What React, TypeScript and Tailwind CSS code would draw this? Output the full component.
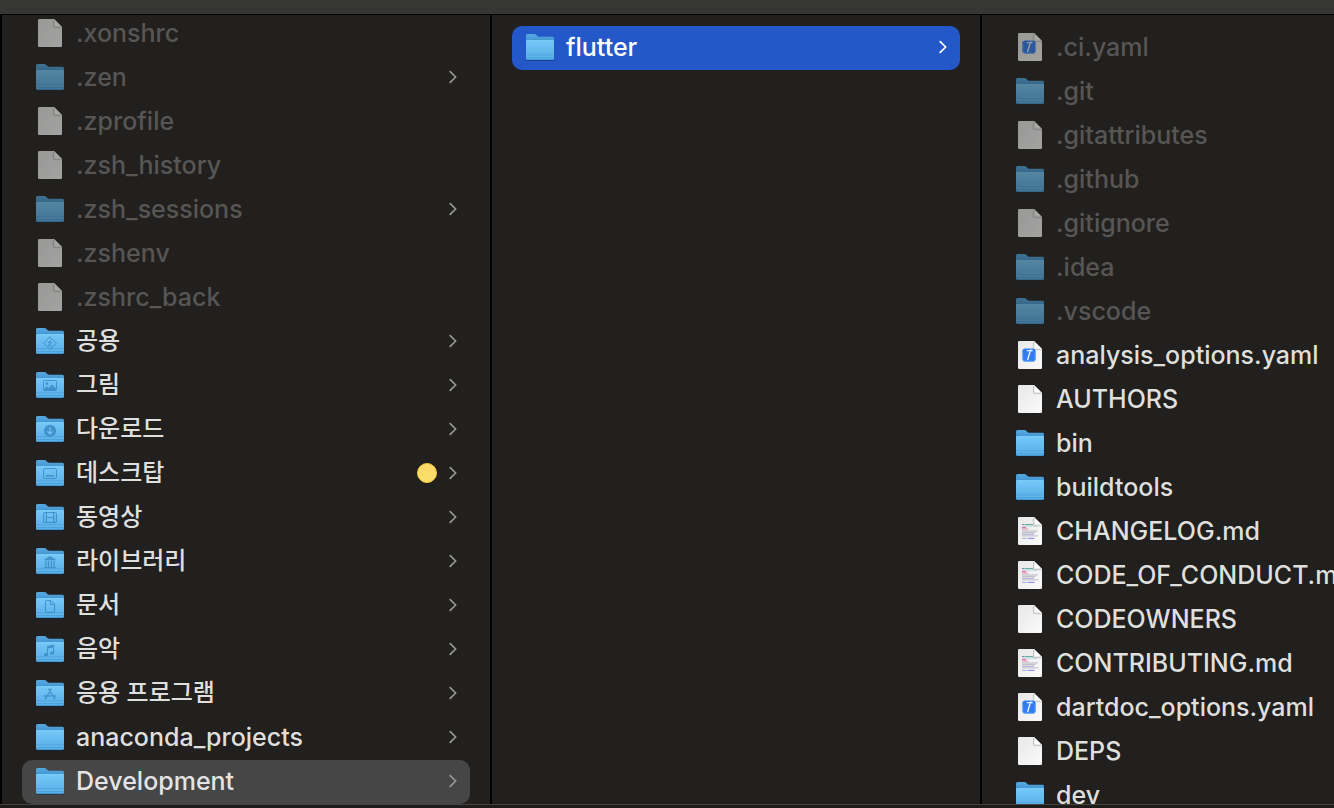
import type { ReactNode } from "react";

type Kind = "folder" | "file" | "yaml" | "md";

type Entry = {
  name: string;
  kind: Kind;
  hidden?: boolean;
  chevron?: boolean;
  tag?: boolean;
  korean?: boolean;
  state?: "selected" | "active";
  glyph?: ReactNode;
};

const line = { fill: "none", stroke: "#3583c1", strokeWidth: 1 };

const sharedGlyph = (
  <g {...line}>
    <path d="M14 8.8 L20.4 15.2 L14 21.6 L7.6 15.2 Z" strokeLinejoin="round" />
    <path d="M14.4 13 L13.4 16 L15.2 17.6 L15 19.2 M13.4 16 L12 18.8 M12 14.6 L14.2 13.6 L16.4 15.2" />
    <circle cx="14.6" cy="11.7" r="0.6" fill="#3583c1" stroke="none" />
  </g>
);
const pictureGlyph = (
  <g>
    <rect x="7.5" y="8.5" width="13" height="10" rx="1" {...line} />
    <circle cx="11" cy="11.6" r="1.3" fill="#3583c1" />
    <path d="M8 18.4 V17 L11 14.6 L12.8 16 L16 12.6 L20 16.6 V18.4 Z" fill="#3583c1" />
  </g>
);
const downloadGlyph = (
  <g>
    <circle cx="14" cy="14.8" r="6.1" fill="#3583c1" />
    <path d="M14 11.4 V17.6 M11.4 15.4 L14 18 L16.6 15.4" fill="none" stroke="#7cc4f0" strokeWidth="1.3" />
  </g>
);
const desktopGlyph = (
  <g>
    <rect x="7.5" y="8.5" width="13" height="10" rx="1.5" {...line} />
    <rect x="10" y="15" width="8" height="1.6" fill="#3583c1" />
  </g>
);
const movieGlyph = (
  <g {...line}>
    <rect x="7.5" y="8.5" width="13" height="10" rx="1" />
    <path d="M10.5 8.5 V18.5 M17.5 8.5 V18.5 M10.5 13.5 H17.5" />
    <path d="M9 9.5 V18" strokeDasharray="1 1.5" />
    <path d="M19 9.5 V18" strokeDasharray="1 1.5" />
  </g>
);
const libraryGlyph = (
  <g fill="#3583c1">
    <path d="M14 8 L19.6 11.2 V12.2 H8.4 V11.2 Z" />
    <rect x="9.2" y="12.8" width="1.3" height="6" />
    <rect x="11.9" y="12.8" width="1.3" height="6" />
    <rect x="14.8" y="12.8" width="1.3" height="6" />
    <rect x="17.5" y="12.8" width="1.3" height="6" />
    <rect x="8" y="19" width="12" height="1.2" />
  </g>
);
const documentGlyph = (
  <g {...line}>
    <path d="M10.4 8.5 H14.6 L18.6 12.5 V19 Q18.6 20.4 17.2 20.4 H10.9 Q9.5 20.4 9.5 19 V9.6 Q9.5 8.5 10.4 8.5 Z" />
    <path d="M14.4 8.8 V12.6 H18.4" />
  </g>
);
const musicGlyph = (
  <g fill="#3583c1">
    <path d="M11 10 L18 8.4 V17 H17 V11.4 L12 12.5 V18.4 H11 Z" />
    <ellipse cx="10.1" cy="18.6" rx="2.1" ry="1.6" />
    <ellipse cx="16.1" cy="17" rx="2.1" ry="1.6" />
  </g>
);
const appsGlyph = (
  <g {...line} strokeWidth="1.4" strokeLinecap="round">
    <path d="M15.2 9 L9.4 18.8 M12.8 9 L18.6 18.8 M8 16 H14.6 M17.2 16 H20" />
  </g>
);

const home: Entry[] = [
  { name: ".xonshrc", kind: "file", hidden: true },
  { name: ".zen", kind: "folder", hidden: true, chevron: true },
  { name: ".zprofile", kind: "file", hidden: true },
  { name: ".zsh_history", kind: "file", hidden: true },
  { name: ".zsh_sessions", kind: "folder", hidden: true, chevron: true },
  { name: ".zshenv", kind: "file", hidden: true },
  { name: ".zshrc_back", kind: "file", hidden: true },
  { name: "공용", kind: "folder", korean: true, chevron: true, glyph: sharedGlyph },
  { name: "그림", kind: "folder", korean: true, chevron: true, glyph: pictureGlyph },
  { name: "다운로드", kind: "folder", korean: true, chevron: true, glyph: downloadGlyph },
  { name: "데스크탑", kind: "folder", korean: true, chevron: true, tag: true, glyph: desktopGlyph },
  { name: "동영상", kind: "folder", korean: true, chevron: true, glyph: movieGlyph },
  { name: "라이브러리", kind: "folder", korean: true, chevron: true, glyph: libraryGlyph },
  { name: "문서", kind: "folder", korean: true, chevron: true, glyph: documentGlyph },
  { name: "음악", kind: "folder", korean: true, chevron: true, glyph: musicGlyph },
  { name: "응용 프로그램", kind: "folder", korean: true, chevron: true, glyph: appsGlyph },
  { name: "anaconda_projects", kind: "folder", chevron: true },
  { name: "Development", kind: "folder", chevron: true, state: "selected" },
];

const development: Entry[] = [
  { name: "flutter", kind: "folder", chevron: true, state: "active" },
];

const flutter: Entry[] = [
  { name: ".ci.yaml", kind: "yaml", hidden: true },
  { name: ".git", kind: "folder", hidden: true },
  { name: ".gitattributes", kind: "file", hidden: true },
  { name: ".github", kind: "folder", hidden: true },
  { name: ".gitignore", kind: "file", hidden: true },
  { name: ".idea", kind: "folder", hidden: true },
  { name: ".vscode", kind: "folder", hidden: true },
  { name: "analysis_options.yaml", kind: "yaml" },
  { name: "AUTHORS", kind: "file" },
  { name: "bin", kind: "folder" },
  { name: "buildtools", kind: "folder" },
  { name: "CHANGELOG.md", kind: "md" },
  { name: "CODE_OF_CONDUCT.md", kind: "md" },
  { name: "CODEOWNERS", kind: "file" },
  { name: "CONTRIBUTING.md", kind: "md" },
  { name: "dartdoc_options.yaml", kind: "yaml" },
  { name: "DEPS", kind: "file" },
  { name: "dev", kind: "folder" },
];

function Gradients() {
  return (
    <svg className="absolute size-0" aria-hidden="true">
      <defs>
        <linearGradient id="folder-front" x1="0" y1="0" x2="0" y2="1">
          <stop offset="0" stopColor="#7bcdf8" />
          <stop offset="0.1" stopColor="#72c6f6" />
          <stop offset="1" stopColor="#56ace6" />
        </linearGradient>
        <linearGradient id="folder-back" x1="0" y1="0" x2="0" y2="1">
          <stop offset="0" stopColor="#55a9e0" />
          <stop offset="1" stopColor="#3786c4" />
        </linearGradient>
        <linearGradient id="paper" x1="0" y1="0" x2="1" y2="1">
          <stop offset="0" stopColor="#e8e8e8" />
          <stop offset="1" stopColor="#fafafa" />
        </linearGradient>
      </defs>
    </svg>
  );
}

function FolderIcon({ glyph }: { glyph?: ReactNode }) {
  return (
    <svg viewBox="0 -1 28 28" className="size-7 overflow-visible" aria-hidden="true">
      <rect x="0.3" y="20" width="27.4" height="7" rx="1.5" fill="#000000" opacity="0.35" />
      <path d="M0 1.5 Q0 0 1.5 0 H8.2 Q9.4 0 10.2 0.8 L11.4 2 Q12.2 2.8 13.4 2.8 H26.5 Q28 2.8 28 4.3 V12 H0 Z" fill="url(#folder-back)" />
      <path d="M0 7.4 Q0 6 1.4 6 H26.6 Q28 6 28 7.4 V24.6 Q28 26 26.6 26 H1.4 Q0 26 0 24.6 Z" fill="url(#folder-front)" />
      <path d="M0 21 H28 M0 23.5 H28" stroke="#4296d2" strokeWidth="0.8" opacity="0.65" />
      <path d="M0 22 H28" stroke="#82cdf5" strokeWidth="0.7" opacity="0.5" />
      <path d="M0.6 25.4 Q1 25.7 1.6 25.7 H26.4 Q27 25.7 27.4 25.4" stroke="#3887c6" strokeWidth="0.7" fill="none" />
      {glyph && <g opacity="0.75">{glyph}</g>}
    </svg>
  );
}

function FileIcon({ kind }: { kind: Kind }) {
  return (
    <svg viewBox="0 0 28 28" className="size-7" aria-hidden="true">
      <path d="M2 1.3 Q2 0 3.3 0 H18 L26 8 V26.7 Q26 28 24.7 28 H3.3 Q2 28 2 26.7 Z" fill="url(#paper)" />
      <path d="M17.4 1 V7.4 Q17.4 8.6 18.6 8.6 H25.4" fill="none" stroke="#000000" strokeWidth="1.2" opacity="0.13" />
      <path d="M18 0 L26 8 H19 Q18 8 18 7 Z" fill="#ffffff" stroke="#b4b4b4" strokeWidth="0.5" />
      {kind === "yaml" && (
        <g>
          <rect x="6.4" y="7.4" width="13.2" height="13.2" rx="2.8" fill="#2f7cf3" />
          <path d="M6.9 12 V18 Q6.9 20.1 9 20.1 H17 Q19.1 20.1 19.1 18 V12" fill="none" stroke="#65a6fa" strokeWidth="0.8" />
          <path d="M10.8 9.9 L15.5 9.2 L16.4 10.2" fill="none" stroke="#dfe7f2" strokeWidth="1.3" />
          <path d="M14.2 10 L11.7 18.5" fill="none" stroke="#eef3fa" strokeWidth="1.4" strokeLinecap="round" />
        </g>
      )}
      {kind === "md" && (
        <g fill="none" strokeWidth="0.9">
          <path d="M6 7.5 H8" stroke="#9467bd" />
          <path d="M8.5 7.5 H17" stroke="#54a89c" />
          <path d="M6 9 H21" stroke="#a9cbd2" />
          <path d="M6 10.7 H10" stroke="#d6438b" />
          <path d="M6 12 H12" stroke="#df83ae" />
          <path d="M6 14 H21.5 M6 15.4 H19.5" stroke="#b5b5bd" />
          <path d="M6 17.2 H18" stroke="#9a92d8" />
          <path d="M6 18.9 H22" stroke="#b9b9c1" />
          <path d="M6 21.4 H11" stroke="#a5a5d8" />
          <path d="M12 21.4 H18.5" stroke="#6c78e6" />
        </g>
      )}
    </svg>
  );
}

function Chevron() {
  return (
    <svg viewBox="0 0 8 14" className="h-3.5 w-2" fill="none" stroke="currentColor" strokeWidth="1.7" strokeLinecap="round" strokeLinejoin="round" aria-hidden="true">
      <path d="M1.2 1.6 L6.7 7 L1.2 12.4" />
    </svg>
  );
}

const rowStyles = {
  plain: "text-[#dfdfdd]",
  hidden: "text-[#575654]",
  selected: "bg-[#464646] text-[#e4e4e4]",
  active: "bg-[#2458c9] text-white",
};

function Row({ entry }: { entry: Entry }) {
  const style = rowStyles[entry.state ?? (entry.hidden ? "hidden" : "plain")];
  return (
    <li>
      <button
        type="button"
        className={`flex h-11 w-full items-center gap-3 rounded-[10px] pr-[13px] pb-0.5 pl-3.5 text-left whitespace-nowrap ${style}`}
      >
        <span className={`shrink-0 ${entry.hidden ? "opacity-60" : ""}`}>
          {entry.kind === "folder" ? <FolderIcon glyph={entry.glyph} /> : <FileIcon kind={entry.kind} />}
        </span>
        <span className={`grow leading-8 font-medium ${entry.korean ? "text-[24px]" : "text-[25px]"}`}>{entry.name}</span>
        {entry.tag && <span className="size-5 shrink-0 rounded-full border border-[#f3cb3c] bg-[#fbdc68]" />}
        {entry.chevron && (
          <span className={entry.state === "active" ? "text-white" : "text-[#979795]"}>
            <Chevron />
          </span>
        )}
      </button>
    </li>
  );
}

function Column({ label, entries, className }: { label: string; entries: Entry[]; className: string }) {
  return (
    <section aria-label={label} className={`overflow-hidden px-5 ${className}`}>
      <ul>
        {entries.map((entry) => (
          <Row key={entry.name} entry={entry} />
        ))}
      </ul>
    </section>
  );
}

export default function App() {
  return (
    <div className="flex h-screen flex-col overflow-hidden bg-[#1d1c1b] font-['Inter','Noto_Sans_CJK_KR',sans-serif]">
      <Gradients />
      <header className="h-[15px] shrink-0 border-b border-black bg-[#363634]" />
      <main className="flex min-h-0 flex-1 border-l-2 border-black bg-[#21201e]">
        <Column label="Home" entries={home} className="flex w-[490px] shrink-0 flex-col justify-end border-r-2 border-black *:w-full" />
        <Column label="Development" entries={development} className="w-[490px] shrink-0 border-r-2 border-black pt-[11px]" />
        <Column label="flutter" entries={flutter} className="min-w-0 flex-1 pt-[11px]" />
      </main>
      <footer className="h-1 shrink-0 border-t border-[#454443] bg-[#1d1c1b]" />
    </div>
  );
}
